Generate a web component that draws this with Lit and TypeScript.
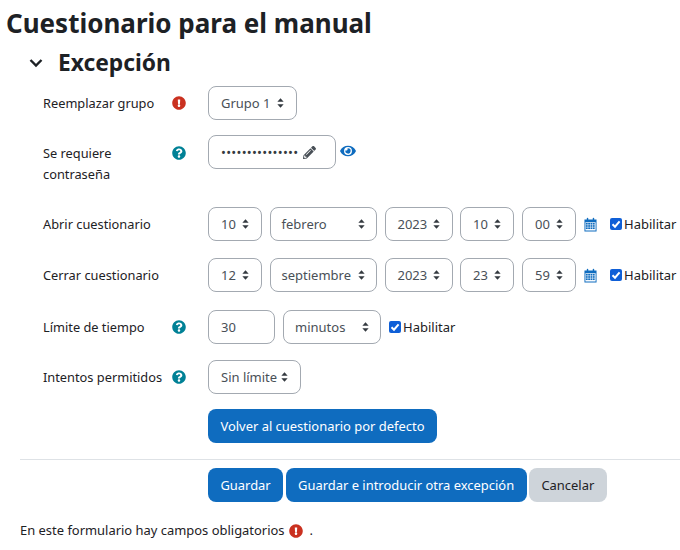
import { LitElement, html, css, svg } from "lit";
import { customElement } from "lit/decorators.js";

const EXC = "M504 256c0 136.997-111.043 248-248 248S8 392.997 8 256C8 119.083 119.043 8 256 8s248 111.083 248 248zm-248 50c-25.405 0-46 20.595-46 46s20.595 46 46 46 46-20.595 46-46-20.595-46-46-46zm-43.673-165.346l7.418 136c.347 6.364 5.609 11.346 11.982 11.346h48.546c6.373 0 11.635-4.982 11.982-11.346l7.418-136c.375-6.874-5.098-12.654-11.982-12.654h-63.383c-6.884 0-12.356 5.78-11.981 12.654z";
const QUE = "M504 256c0 136.997-111.043 248-248 248S8 392.997 8 256C8 119.083 119.043 8 256 8s248 111.083 248 248zM262.655 90c-54.497 0-89.255 22.957-116.549 63.758-3.536 5.286-2.353 12.415 2.715 16.258l34.699 26.31c5.205 3.947 12.621 3.008 16.665-2.122 17.864-22.658 30.113-35.797 57.303-35.797 20.429 0 45.698 13.148 45.698 32.958 0 14.976-12.363 22.667-32.534 33.976C247.128 238.528 216 254.941 216 296v4c0 6.627 5.373 12 12 12h56c6.627 0 12-5.373 12-12v-1.333c0-28.462 83.186-29.647 83.186-106.667 0-58.002-60.165-102-116.531-102zM256 338c-25.365 0-46 20.635-46 46 0 25.364 20.635 46 46 46s46-20.636 46-46c0-25.365-20.635-46-46-46z";
const PEN = "M497.9 142.1l-46.1 46.1c-4.7 4.7-12.3 4.7-17 0l-111-111c-4.7-4.7-4.7-12.3 0-17l46.1-46.1c18.7-18.7 49.1-18.7 67.9 0l60.1 60.1c18.8 18.7 18.8 49.1 0 67.9zM284.2 99.8L21.6 362.4.4 483.9c-2.9 16.4 11.4 30.6 27.8 27.8l121.5-21.3 262.6-262.6c4.7-4.7 4.7-12.3 0-17l-111-111c-4.8-4.7-12.4-4.7-17.1 0zM124.1 339.9c-5.5-5.5-5.5-14.3 0-19.8l154-154c5.5-5.5 14.3-5.5 19.8 0s5.5 14.3 0 19.8l-154 154c-5.5 5.5-14.3 5.5-19.8 0zM88 424h48v36.3l-64.5 11.3-31.1-31.1L51.7 376H88v48z";
const EYE = "M572.52 241.4C518.29 135.59 410.93 64 288 64S57.68 135.64 3.48 241.41a32.35 32.35 0 0 0 0 29.19C57.71 376.41 165.07 448 288 448s230.32-71.64 284.52-177.41a32.35 32.35 0 0 0 0-29.19zM288 400a144 144 0 1 1 144-144 143.93 143.93 0 0 1-144 144zm0-240a95.31 95.31 0 0 0-25.31 3.79 47.85 47.85 0 0 1-66.9 66.9A95.78 95.78 0 1 0 288 160z";

const icon = (d: string, cls: string, vb = "0 0 512 512") =>
  html`<svg class=${cls} viewBox=${vb}><path d=${d} fill="currentColor"></path></svg>`;

const arrows = html`<svg class="arrows" viewBox="0 0 8 11"><path d="M4 0 L7.6 4 H0.4 Z M4 11 L7.6 7 H0.4 Z" fill="#343a40"></path></svg>`;

const calendar = html`<svg class="cal" viewBox="0 0 14 15">
  <path fill-rule="evenodd" fill="currentColor" d="M0.5 2.2 H3 V1 a.8 .8 0 0 1 1.6 0 V2.2 H9.4 V1 a.8 .8 0 0 1 1.6 0 V2.2 H13.5 V15 H0.5 Z M1.5 5.2 V14 H12.5 V5.2 Z"></path>
  ${[5.8, 8.2, 10.6].map((y) => [2, 4.5, 7, 9.5].map((x) => svg`<rect x=${x} y=${y} width="2" height="1.8" fill="currentColor"></rect>`))}
</svg>`;

const select = (text: string, cls: string) =>
  html`<div class="ctl sel ${cls}"><span>${text}</span>${arrows}</div>`;

const check = html`<label class="chk"><span class="box"><svg viewBox="0 0 12 12"><path d="M2.5 6.2 L5 8.7 L9.6 3.4" fill="none" stroke="#fff" stroke-width="2"></path></svg></span>Habilitar</label>`;

const dateRow = (d: string, m: string, y: string, h: string, min: string) => html`
  ${select(d, "w54")}${select(m, "w106")}${select(y, "w68")}${select(h, "w54")}${select(min, "w54")}
  ${calendar}${check}`;

@customElement("app-root")
export class AppRoot extends LitElement {
  static styles = css`
    :host { display: block; width: 680px; height: 550px; overflow: hidden; background: #fff; color: #1d2125;
      font-family: "Noto Sans", "Open Sans", sans-serif; font-size: 13px; line-height: 21px; }
    * { box-sizing: border-box; }
    h1 { margin: 0; padding: 5px 0 0 6px; font-size: 26px; line-height: 36px; font-weight: 700; }
    .section { display: flex; align-items: center; margin: 4px 0 5px 0; padding-left: 29px; height: 36px; }
    .section svg { width: 14px; height: 10px; margin-right: 15px; }
    h2 { margin: 0; font-size: 22.8px; line-height: 36px; font-weight: 700; }
    .row { display: flex; align-items: flex-start; padding-left: 43px; min-height: 34px; }
    .m15 { margin-bottom: 15px; }
    .m16 { margin-bottom: 16px; }
    .m17 { margin-bottom: 17px; }
    .m18 { margin-bottom: 18px; }
    .tall { height: 57px; }
    .label { width: 128px; padding-top: 7px; flex: none; color: #1d2125; font-size: 12.8px; }
    .tall .label { padding-top: 8px; }
    .ic { width: 37px; flex: none; padding-top: 8px; height: 34px; display: flex; }
    .tall .ic { padding-top: 9px; }
    .ic svg { width: 14px; height: 14px; margin: 2px 0 0 1px; }
    .red { color: #ca3120; }
    .teal { color: #008196; }
    .controls { display: flex; align-items: flex-start; }
    .ctl { height: 34px; border: 1px solid #a3a9b1; border-radius: 8px; background: #fff; color: #495057; display: flex; align-items: center; padding: 0 12px; flex: none; }
    .sel { justify-content: space-between; margin-right: 8px; }
    .arrows { width: 7px; height: 10px; flex: none; margin-bottom: 1px; }
    .w54 { width: 54px; }
    .w106 { width: 106.5px; padding: 0 11px 0 10.5px; }
    .w68 { width: 68px; margin-right: 7.5px; }
    .w98 { width: 98px; padding: 0 11px; margin-right: 0; }
    .w89 { width: 89px; margin-right: 0; }
    .w93 { width: 93px; margin-right: 0; }
    .num { width: 67px; margin-right: 8px; }
    .pass { width: 128px; color: #1d2125; justify-content: flex-start; gap: 5px; }
    .dots { font-size: 13px; letter-spacing: 0.27px; color: #343a40; }
    .pen { width: 13px; height: 13px; color: #495057; flex: none; }
    .eye { width: 16px; height: 14px; color: #0f6cbf; margin: 9px 0 0 4px; flex: none; }
    .cal { width: 13px; height: 15px; color: #0f6cbf; margin: 10px 13px 0 0; flex: none; }
    .chk { display: flex; align-items: center; height: 34px; color: #1d2125; flex: none; }
    .box { width: 12px; height: 12px; border-radius: 2px; background: #0f5fd7; margin-right: 2px; display: flex; flex: none; }
    .box svg { width: 12px; height: 12px; }
    .btn { height: 34px; border-radius: 8px; background: #0f6cbf; color: #fff; display: flex; align-items: center; padding: 0 12.4px; flex: none; font-size: 12.95px; }
    .grey { background: #ced4da; color: #1d2125; }
    .offset { margin-left: 165px; }
    hr { margin: 0 0 8px 20px; border: 0; border-top: 1px solid #dee2e6; height: 1px; }
    .actions { display: flex; gap: 2.5px; padding-left: 208px; }
    .note { display: flex; align-items: center; margin: 18px 0 0 20px; color: #1d2125; font-size: 12.95px; }
    .note svg { width: 14px; height: 14px; margin: 0 7px 0 4px; }
  `;

  render() {
    return html`
      <h1>Cuestionario para el manual</h1>
      <div class="section">
        <svg viewBox="0 0 14 10"><path d="M1.5 2 L7 7.5 L12.5 2" fill="none" stroke="#1d2125" stroke-width="2.4"></path></svg>
        <h2>Excepción</h2>
      </div>
      <div class="row m15">
        <div class="label">Reemplazar grupo</div>
        <div class="ic red">${icon(EXC, "")}</div>
        <div class="controls">${select("Grupo 1", "w89")}</div>
      </div>
      <div class="row m15 tall">
        <div class="label">Se requiere contraseña</div>
        <div class="ic teal">${icon(QUE, "")}</div>
        <div class="controls">
          <div class="ctl pass"><span class="dots">•••••••••••••••</span>${icon(PEN, "pen")}</div>
          ${icon(EYE, "eye", "0 0 576 512")}
        </div>
      </div>
      <div class="row m17">
        <div class="label">Abrir cuestionario</div><div class="ic"></div>
        <div class="controls">${dateRow("10", "febrero", "2023", "10", "00")}</div>
      </div>
      <div class="row m18">
        <div class="label">Cerrar cuestionario</div><div class="ic"></div>
        <div class="controls">${dateRow("12", "septiembre", "2023", "23", "59")}</div>
      </div>
      <div class="row m16">
        <div class="label">Límite de tiempo</div>
        <div class="ic teal">${icon(QUE, "")}</div>
        <div class="controls"><div class="ctl num">30</div>${select("minutos", "w98")}<span style="width:8px"></span>${check}</div>
      </div>
      <div class="row m15">
        <div class="label">Intentos permitidos</div>
        <div class="ic teal">${icon(QUE, "")}</div>
        <div class="controls">${select("Sin límite", "w93")}</div>
      </div>
      <div class="row m16">
        <div class="offset"><div class="btn">Volver al cuestionario por defecto</div></div>
      </div>
      <hr />
      <div class="actions">
        <div class="btn">Guardar</div>
        <div class="btn">Guardar e introducir otra excepción</div>
        <div class="btn grey">Cancelar</div>
      </div>
      <div class="note">En este formulario hay campos obligatorios <span class="red" style="display:flex">${icon(EXC, "")}</span>.</div>
    `;
  }
}
